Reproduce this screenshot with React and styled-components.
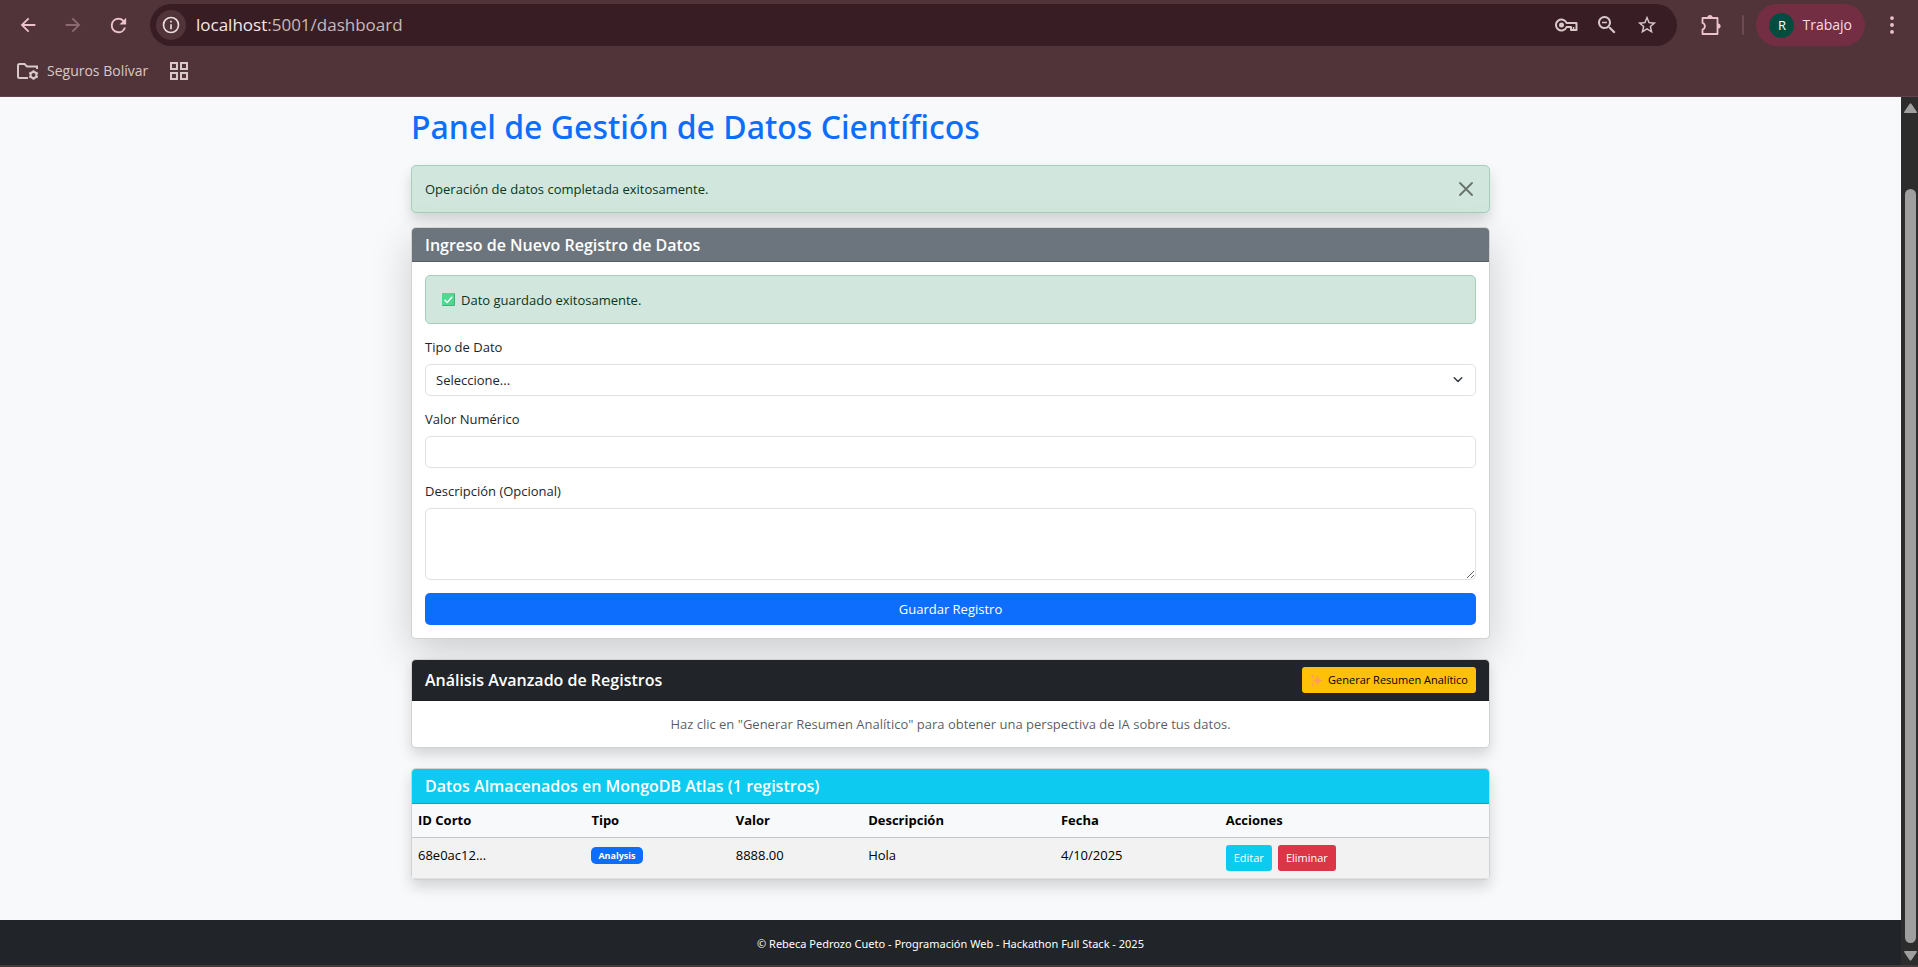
import React from "react";
import styled, { createGlobalStyle } from "styled-components";

const Global = createGlobalStyle`
  *, *::before, *::after { box-sizing: border-box; }
  body {
    margin: 0;
    background: #f8f9fa;
    color: #212529;
    font-family: "Open Sans", "Noto Sans", sans-serif;
    font-size: 13px;
    line-height: 20px;
  }
  button, input, select, textarea { font: inherit; margin: 0; }
`;

const Window = styled.div`
  min-height: 100vh;
  display: flex;
  flex-direction: column;
  border-bottom: 2px solid #423a3b;
`;

/* Browser chrome */
const Chrome = styled.header`
  background: #513439;
  color: #e3d3d5;
  border-bottom: 1px solid #5f4549;
  padding: 4px 14px 0 16px;
  height: 97px;
`;

const Toolbar = styled.div`
  display: flex;
  align-items: center;
  height: 42px;
`;

const IconButton = styled.button`
  display: grid;
  place-items: center;
  width: ${(p) => p.$w || 24}px;
  height: 24px;
  padding: 0;
  border: 0;
  background: none;
  color: ${(p) => p.$color || "#d8c8ca"};
`;

const NavButtons = styled.nav`
  display: flex;
  gap: 21px;
  margin-right: 20px;
`;

const Omnibox = styled.div`
  flex: 1;
  height: 42px;
  display: flex;
  align-items: center;
  gap: 16px;
  margin-right: 22px;
  padding: 0 18px 0 6px;
  border-radius: 21px;
  background: #381e24;
`;

const SiteInfo = styled.button`
  display: grid;
  place-items: center;
  width: 30px;
  height: 30px;
  margin-right: -6px;
  padding: 0;
  border: 0;
  border-radius: 50%;
  background: #513439;
  color: #eadcde;
`;

const Address = styled.div`
  flex: 1;
  font-size: 17px;
  line-height: 24px;
  color: #c9b9bb;
  b { font-weight: 400; color: #f5e8ea; }
`;

const Separator = styled.span`
  width: 2px;
  height: 20px;
  margin: 0 12px 0 19px;
  border-radius: 1px;
  background: #6d4b52;
`;

const Profile = styled.button`
  display: flex;
  align-items: center;
  gap: 8px;
  height: 42px;
  margin-right: 15px;
  padding: 0 13px;
  border: 0;
  border-radius: 21px;
  background: #732e43;
  color: #ffd9e2;
  font-size: 14px;
`;

const Avatar = styled.span`
  width: 25px;
  height: 25px;
  border-radius: 50%;
  background: #004d40;
  color: #fff;
  font-size: 13px;
  line-height: 25px;
  text-align: center;
`;

const Bookmarks = styled.div`
  display: flex;
  align-items: center;
  gap: 22px;
  height: 50px;
`;

const Bookmark = styled.a`
  display: flex;
  align-items: center;
  gap: 8px;
  color: #d8c8ca;
  text-decoration: none;
  font-size: 14px;
`;

/* Page viewport */
const Viewport = styled.div`
  flex: 1;
  display: flex;
`;

const Page = styled.div`
  flex: 1;
  min-width: 0;
  display: flex;
  flex-direction: column;
`;

const Scrollbar = styled.div`
  width: 17px;
  display: flex;
  flex-direction: column;
  align-items: center;
  padding: 6px 1px 4px 2px;
  background: #2c2c2c;
  color: #9f9f9f;
`;

const ScrollThumb = styled.div`
  flex: 1;
  width: 11px;
  margin: 76px 0 8px;
  border-radius: 6px;
  background: #9f9f9f;
`;

const Container = styled.main`
  flex: 1;
  width: 100%;
  max-width: 1079px;
  margin: 0 auto;
  padding: 10px 0 20px;
`;

const Title = styled.h1`
  margin: 0 0 18px;
  font-family: "Noto Sans", sans-serif;
  font-size: 32px;
  line-height: 40px;
  font-weight: 500;
  color: #0d6efd;
`;

const Alert = styled.div`
  display: flex;
  align-items: center;
  justify-content: space-between;
  height: ${(p) => (p.$shadow ? 48 : 49)}px;
  margin-bottom: ${(p) => (p.$shadow ? 14 : 13)}px;
  padding: 0 16px 0 ${(p) => (p.$shadow ? 13 : 16)}px;
  border: 1px solid #a3cfbb;
  border-radius: 5px;
  background: #d1e7dd;
  color: #0a3622;
  box-shadow: ${(p) => (p.$shadow ? "0 7px 14px rgba(0, 0, 0, 0.15)" : "none")};
`;

const CloseButton = styled.button`
  display: grid;
  padding: 0;
  border: 0;
  background: none;
  color: #000;
  opacity: 0.5;
`;

const Message = styled.span`
  display: flex;
  align-items: center;
  gap: 6px;
`;

const Card = styled.section`
  margin-bottom: 20px;
  border: 1px solid rgba(0, 0, 0, 0.175);
  border-radius: 5px;
  background: #fff;
  box-shadow: ${(p) => (p.$large ? "0 14px 42px rgba(0, 0, 0, 0.175)" : "0 7px 14px rgba(0, 0, 0, 0.15)")};
`;

const CardHeader = styled.header`
  display: flex;
  align-items: center;
  justify-content: space-between;
  height: ${(p) => p.$height || 34}px;
  padding: 0 13px;
  border-bottom: 1px solid rgba(0, 0, 0, 0.175);
  border-radius: 4px 4px 0 0;
  background: ${(p) => p.$bg};
  color: #fff;
`;

const CardTitle = styled.h2`
  margin: 0;
  font-size: 16px;
  line-height: 20px;
  font-weight: 600;
`;

const CardBody = styled.div`
  padding: 13px;
`;

const Form = styled.form`
  display: flex;
  flex-direction: column;
  gap: 13px;
`;

const Field = styled.div`
  display: flex;
  flex-direction: column;
  position: relative;
  label { margin-bottom: 7px; }
`;

const control = `
  width: 100%;
  height: 32px;
  padding: 4px 10px;
  border: 1px solid #dee2e6;
  border-radius: 5px;
  background: #fff;
  color: #212529;
  outline: none;
`;
const Select = styled.select`${control} appearance: none;`;
const Input = styled.input`${control}`;
const TextArea = styled.textarea`${control} height: 72px; display: block;`;

const Caret = styled.svg`
  position: absolute;
  right: 12px;
  bottom: 10px;
  pointer-events: none;
`;

const palette = {
  primary: ["#0d6efd", "#fff"],
  warning: ["#ffc107", "#000"],
  info: ["#0dcaf0", "#fff"],
  danger: ["#dc3545", "#fff"],
};

const Button = styled.button`
  display: inline-flex;
  align-items: center;
  justify-content: center;
  gap: 5px;
  height: ${(p) => (p.$small ? 26 : 32)}px;
  padding: 0 8px;
  border: 0;
  border-radius: ${(p) => (p.$small ? 3 : 5)}px;
  font-size: ${(p) => (p.$small ? 11 : 13)}px;
  background: ${(p) => palette[p.$kind][0]};
  color: ${(p) => palette[p.$kind][1]};
`;

const Hint = styled.p`
  margin: 0;
  text-align: center;
  color: rgba(33, 37, 41, 0.75);
`;

const Table = styled.table`
  width: 100%;
  table-layout: fixed;
  border-collapse: separate;
  border-spacing: 0;
  color: #000;
  th, td { padding: 0 6px; text-align: left; vertical-align: top; }
  th {
    height: 34px;
    padding-top: 6px;
    background: #f8f9fa;
    border-bottom: 1px solid #c6c7c8;
    font-weight: 700;
  }
  td {
    height: 41px;
    padding-top: 7px;
    background: #f2f2f2;
    border-bottom: 1px solid #dee2e6;
  }
`;

const Column = styled.col`
  width: ${(p) => p.$share}%;
`;

const Badge = styled.span`
  display: block;
  width: fit-content;
  margin-top: 2px;
  padding: 0 7px;
  border-radius: 5px;
  background: #0d6efd;
  color: #fff;
  font-size: 9px;
  line-height: 17px;
  font-weight: 700;
`;

const Actions = styled.div`
  display: flex;
  gap: 6px;
`;

const Footer = styled.footer`
  padding: 14px 13px 12px;
  background: #212529;
  color: #fff;
  font-family: "Noto Sans", sans-serif;
  font-size: 11px;
  line-height: 19px;
  text-align: center;
`;

const Glyph = ({ d, size = 24 }) => (
  <svg width={size} height={size} viewBox="0 0 24 24" fill="currentColor" aria-hidden="true">
    <path d={d} />
  </svg>
);

const paths = {
  back: "M20 11H7.83l5.59-5.59L12 4l-8 8 8 8 1.41-1.41L7.83 13H20z",
  forward: "M12 4l-1.41 1.41L16.17 11H4v2h12.17l-5.58 5.59L12 20l8-8z",
  reload: "M17.65 6.35A7.96 7.96 0 0 0 12 4a8 8 0 1 0 7.73 10h-2.08A6 6 0 1 1 12 6c1.66 0 3.14.69 4.22 1.78L13 11h7V4z",
  info: "M11 7h2v2h-2zm0 4h2v6h-2zm1-9a10 10 0 1 0 0 20 10 10 0 0 0 0-20m0 18a8 8 0 1 1 0-16 8 8 0 0 1 0 16",
  zoomOut: "M15.5 14h-.79l-.28-.27A6.5 6.5 0 1 0 13.73 14.43l.27.28v.79l5 4.99L20.49 19zm-6 0a4.5 4.5 0 1 1 0-9 4.5 4.5 0 0 1 0 9M7 8.700h5v1.600H7z",
  star: "M22 9.24l-7.19-.62L12 2 9.19 8.63 2 9.24l5.46 4.73L5.82 21 12 17.27 18.18 21l-1.63-7.03zM12 15.4l-3.76 2.27 1-4.28-3.32-2.88 4.38-.38L12 6.1l1.71 4.04 4.38.38-3.32 2.88 1 4.28z",
  more: "M12 3.200a1.900 1.900 0 1 0 0 3.800 1.900 1.900 0 0 0 0-3.800m0 6.900a1.900 1.900 0 1 0 0 3.800 1.900 1.900 0 0 0 0-3.800m0 6.900a1.900 1.900 0 1 0 0 3.800 1.900 1.900 0 0 0 0-3.800",
};

const KeyIcon = () => (
  <svg width="24" height="14" viewBox="0 0 24 14" fill="none" stroke="currentColor" strokeWidth="2" aria-hidden="true">
    <path d="M11.600 5A5.500 5.500 0 1 0 11.600 9H16v3h5.500V5z" strokeLinejoin="round" />
    <path d="M18.500 9v3" strokeWidth="1.500" />
    <circle cx="6.500" cy="7" r="2.500" fill="currentColor" stroke="none" />
  </svg>
);

const PuzzleIcon = () => (
  <svg width="22" height="22" viewBox="0 0 22 22" fill="none" stroke="currentColor" strokeWidth="1.800" aria-hidden="true">
    <path d="M2.500 4h15v16h-15v-4.500a3.400 3.400 0 0 0 0-6.500z" strokeLinejoin="round" />
    <path d="M7.400 3.500a2.600 2.600 0 0 1 5.200 0zM18 9.400a2.600 2.600 0 0 1 0 5.200z" fill="currentColor" stroke="none" />
  </svg>
);

const FolderIcon = () => (
  <svg width="23" height="19" viewBox="0 0 23 19" fill="none" stroke="currentColor" strokeWidth="2" aria-hidden="true">
    <path d="M12 16H3.500A1.500 1.500 0 0 1 2 14.500V3.500A1.500 1.500 0 0 1 3.500 2h5L11 4.500h10V7" />
    <circle cx="17.500" cy="13" r="3" />
    <path d="M17.500 8.300v2M17.500 15.700v2M13.300 10.700l1.700 1M20 14.300l1.700 1M13.300 15.300l1.700-1M20 11.700l1.700-1" />
  </svg>
);

const GridIcon = () => (
  <svg width="18" height="18" viewBox="0 0 18 18" fill="none" stroke="currentColor" strokeWidth="2" aria-hidden="true">
    <path d="M1 1h6v6H1zM11 1h6v6h-6zM1 11h6v6H1zM11 11h6v6h-6z" />
  </svg>
);

const CheckIcon = () => (
  <svg width="13" height="13" viewBox="0 0 13 13" aria-hidden="true">
    <rect width="13" height="13" rx="1" fill="#3fb27c" />
    <rect width="12" height="12" fill="#50d890" />
    <path d="M2.500 6.800l2.600 2.600 5.200-5.600" fill="none" stroke="#fff" strokeWidth="1.400" />
  </svg>
);

const SparklesIcon = () => (
  <svg width="13" height="13" viewBox="0 0 13 13" fill="#ff9d5c" aria-hidden="true">
    <path d="M7.500 1.500l1.500 3.500 3.900 1.500L9 8.100l-1.500 3.900L6 8.100 2.200 6.500 6 5zM2.500 0l.7 1.700 1.700.7-1.700.7-.7 1.700-.7-1.700L.1 2.400l1.700-.7zM2.500 8.700l.6 1.500 1.500.6-1.500.6-.6 1.500-.6-1.500-1.500-.6 1.500-.6z" />
  </svg>
);

const Arrow = ({ down }) => (
  <svg width="13" height="10" viewBox="0 0 13 10" fill="currentColor" aria-hidden="true">
    <path d={down ? "M1 0h11q1.500 0 .6 1.500L7.500 9q-1 1.500-2 0L.4 1.500Q-.5 0 1 0" : "M1 10h11q1.500 0 .6-1.500L7.500 1q-1-1.500-2 0L.4 8.500Q-.5 10 1 10"} />
  </svg>
);

const columns = [
  ["ID Corto", 16.1],
  ["Tipo", 13.4],
  ["Valor", 12.3],
  ["Descripción", 17.9],
  ["Fecha", 15.3],
  ["Acciones", 25],
];

const records = [{ id: "68e0ac12...", type: "Analysis", value: "8888.00", text: "Hola", date: "4/10/2025" }];

export default function App() {
  return (
    <Window>
      <Global />
      <Chrome>
        <Toolbar>
          <NavButtons>
            <IconButton aria-label="Atrás" $color="#ecc2cc"><Glyph d={paths.back} size={22} /></IconButton>
            <IconButton aria-label="Adelante" $color="#8d6a72"><Glyph d={paths.forward} size={22} /></IconButton>
            <IconButton aria-label="Recargar" $color="#ecc2cc"><Glyph d={paths.reload} size={23} /></IconButton>
          </NavButtons>
          <Omnibox>
            <SiteInfo aria-label="Información del sitio"><Glyph d={paths.info} size={20} /></SiteInfo>
            <Address><b>localhost</b>:5001/dashboard</Address>
            <IconButton aria-label="Contraseñas"><KeyIcon /></IconButton>
            <IconButton aria-label="Alejar"><Glyph d={paths.zoomOut} size={24} /></IconButton>
            <IconButton aria-label="Favorito"><Glyph d={paths.star} size={22} /></IconButton>
          </Omnibox>
          <IconButton aria-label="Extensiones" $color="#ecc2cc"><PuzzleIcon /></IconButton>
          <Separator />
          <Profile><Avatar>R</Avatar>Trabajo</Profile>
          <IconButton aria-label="Menú" $color="#ecc2cc"><Glyph d={paths.more} size={24} /></IconButton>
        </Toolbar>
        <Bookmarks>
          <Bookmark href="#seguros"><FolderIcon />Seguros Bolívar</Bookmark>
          <IconButton aria-label="Aplicaciones" $w={18}><GridIcon /></IconButton>
        </Bookmarks>
      </Chrome>
      <Viewport>
        <Page>
          <Container>
            <Title>Panel de Gestión de Datos Científicos</Title>
            <Alert role="alert" $shadow>
              Operación de datos completada exitosamente.
              <CloseButton aria-label="Cerrar">
                <svg width="14" height="14" viewBox="0 0 14 14" stroke="currentColor" strokeWidth="1.800" strokeLinecap="round"><path d="M1 1l12 12M13 1L1 13" /></svg>
              </CloseButton>
            </Alert>
            <Card $large>
              <CardHeader $bg="#6c757d"><CardTitle>Ingreso de Nuevo Registro de Datos</CardTitle></CardHeader>
              <CardBody>
                <Alert role="status"><Message><CheckIcon />Dato guardado exitosamente.</Message></Alert>
                <Form>
                  <Field>
                    <label htmlFor="tipo">Tipo de Dato</label>
                    <Select id="tipo"><option>Seleccione...</option></Select>
                    <Caret width="12" height="12" viewBox="0 0 16 16" fill="none" stroke="#343a40" strokeWidth="2" strokeLinecap="round" strokeLinejoin="round"><path d="m3 5 5 5 5-5" /></Caret>
                  </Field>
                  <Field>
                    <label htmlFor="valor">Valor Numérico</label>
                    <Input id="valor" />
                  </Field>
                  <Field>
                    <label htmlFor="descripcion">Descripción (Opcional)</label>
                    <TextArea id="descripcion" />
                  </Field>
                  <Button type="button" $kind="primary">Guardar Registro</Button>
                </Form>
              </CardBody>
            </Card>
            <Card>
              <CardHeader $bg="#212529" $height={41}>
                <CardTitle>Análisis Avanzado de Registros</CardTitle>
                <Button $kind="warning" $small><SparklesIcon />Generar Resumen Analítico</Button>
              </CardHeader>
              <CardBody>
                <Hint>Haz clic en "Generar Resumen Analítico" para obtener una perspectiva de IA sobre tus datos.</Hint>
              </CardBody>
            </Card>
            <Card>
              <CardHeader $bg="#0dcaf0" $height={35}><CardTitle>Datos Almacenados en MongoDB Atlas (1 registros)</CardTitle></CardHeader>
              <Table>
                <colgroup>{columns.map(([name, share]) => <Column key={name} $share={share} />)}</colgroup>
                <thead><tr>{columns.map(([name]) => <th key={name} scope="col">{name}</th>)}</tr></thead>
                <tbody>
                  {records.map((r) => (
                    <tr key={r.id}>
                      <td>{r.id}</td>
                      <td><Badge>{r.type}</Badge></td>
                      <td>{r.value}</td>
                      <td>{r.text}</td>
                      <td>{r.date}</td>
                      <td><Actions><Button $kind="info" $small>Editar</Button><Button $kind="danger" $small>Eliminar</Button></Actions></td>
                    </tr>
                  ))}
                </tbody>
              </Table>
            </Card>
          </Container>
          <Footer>© Rebeca Pedrozo Cueto - Programación Web - Hackathon Full Stack - 2025</Footer>
        </Page>
        <Scrollbar aria-hidden="true"><Arrow /><ScrollThumb /><Arrow down /></Scrollbar>
      </Viewport>
    </Window>
  );
}
